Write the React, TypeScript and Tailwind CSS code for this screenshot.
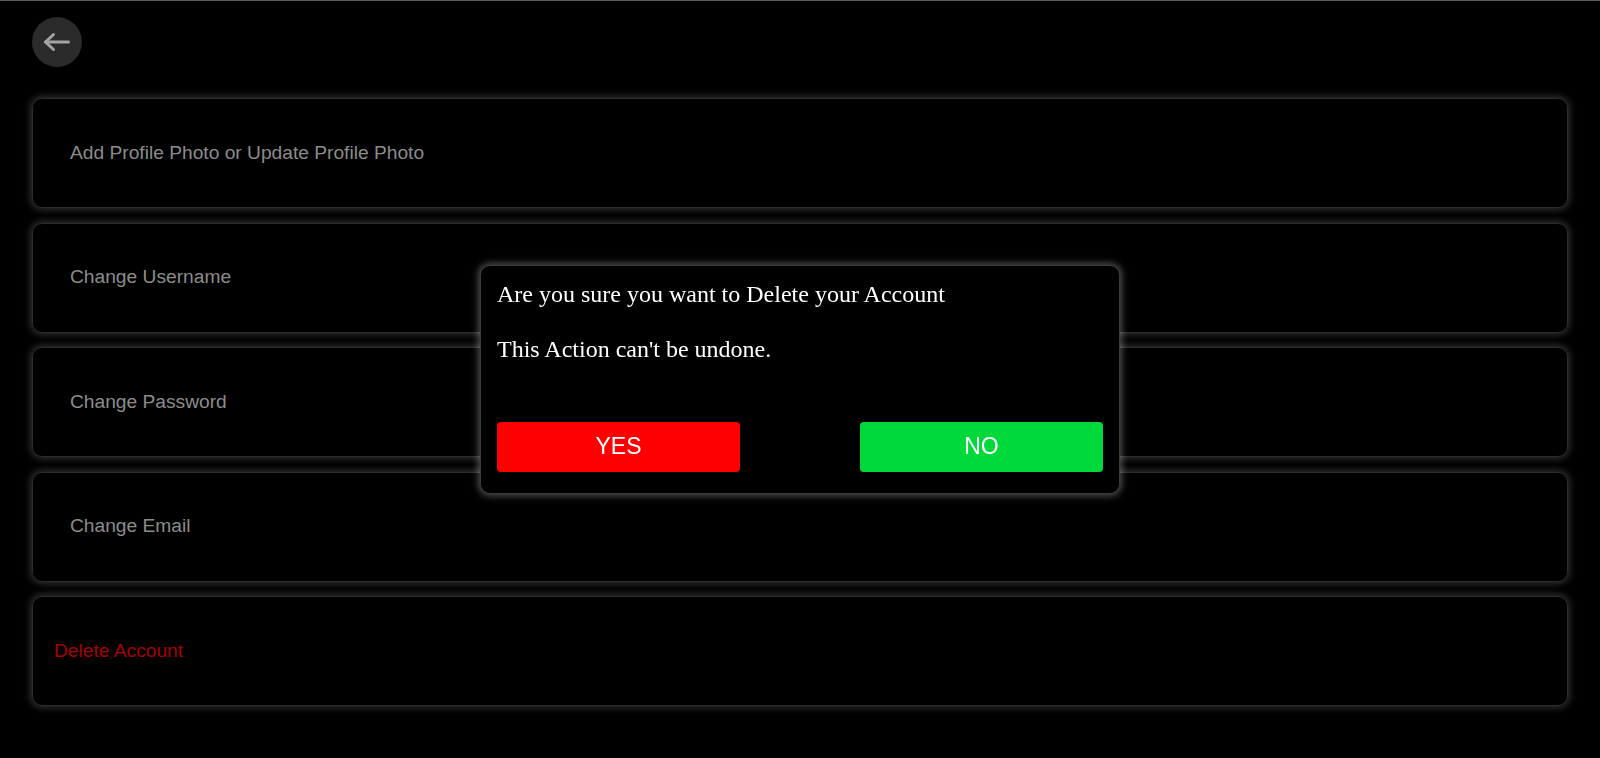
import React from 'react';

const options = [
  { label: 'Add Profile Photo or Update Profile Photo', danger: false },
  { label: 'Change Username', danger: false },
  { label: 'Change Password', danger: false },
  { label: 'Change Email', danger: false },
  { label: 'Delete Account', danger: true },
];

const BackArrow: React.FC = () => (
  <svg width="28" height="20" viewBox="0 0 28 20" fill="none" stroke="#a3a3a3" strokeWidth="3" strokeLinecap="round" strokeLinejoin="round">
    <path d="M2.5 10H25.5" />
    <path d="M10.5 2.5L2.5 10L10.5 17.5" />
  </svg>
);

const App: React.FC = () => {
  return (
    <div className="min-h-[758px] bg-black border-t border-[#5a5a5a] px-8 pt-4 font-['Liberation_Sans',Arial,sans-serif]">
      <button className="w-[50px] h-[50px] rounded-full bg-[#2b2b2b] flex items-center justify-center">
        <BackArrow />
      </button>

      <div className="mt-[31px] flex flex-col gap-[14.6px]">
        {options.map((opt) => (
          <div
            key={opt.label}
            className="h-[110px] rounded-[10px] border border-[#2e2e2e] shadow-[0_0_7px_2px_rgba(255,255,255,0.18)] flex items-center"
          >
            <span
              className={
                opt.danger
                  ? 'pl-[21px] text-[19.2px] text-[#a80000]'
                  : 'pl-[37px] text-[19.2px] text-[#8c8c8c]'
              }
            >
              {opt.label}
            </span>
          </div>
        ))}
      </div>

      <div className="fixed inset-0 flex items-center justify-center">
        <div className="w-[640px] h-[229px] bg-black rounded-[10px] border border-[#3a3a3a] shadow-[0_0_7px_2px_rgba(255,255,255,0.3)] px-4 pt-[14px] flex flex-col font-['Liberation_Serif','Times_New_Roman',serif] text-white">
          <p className="text-[24px] leading-[28px]">Are you sure you want to Delete your Account</p>
          <p className="text-[24px] leading-[28px] mt-[27px]">This Action can't be undone.</p>
          <div className="mt-[59px] flex justify-between font-['Liberation_Sans',Arial,sans-serif]">
            <button className="w-[243px] h-[50px] rounded-[4px] bg-[#ff0000] text-white text-[23px]">YES</button>
            <button className="w-[243px] h-[50px] rounded-[4px] bg-[#00d93a] text-white text-[23px]">NO</button>
          </div>
        </div>
      </div>
    </div>
  );
};

export default App;
